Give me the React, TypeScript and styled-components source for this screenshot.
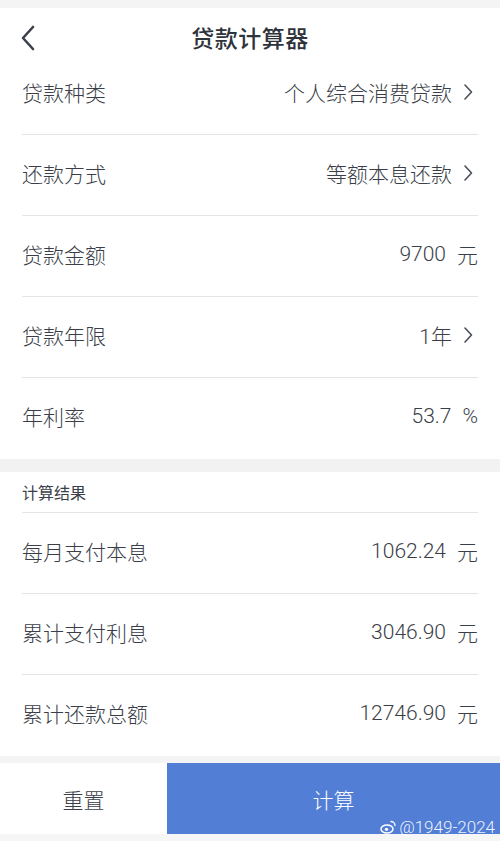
import React from 'react';
import styled, { createGlobalStyle } from 'styled-components';

interface IRow {
  label: string;
  value: string;
  unit?: string;
  arrow?: boolean;
}

const inputRows: IRow[] = [
  { label: '贷款种类', value: '个人综合消费贷款', arrow: true },
  { label: '还款方式', value: '等额本息还款', arrow: true },
  { label: '贷款金额', value: '9700', unit: '元' },
  { label: '贷款年限', value: '1年', arrow: true },
  { label: '年利率', value: '53.7', unit: '%' },
];

const resultRows: IRow[] = [
  { label: '每月支付本息', value: '1062.24', unit: '元' },
  { label: '累计支付利息', value: '3046.90', unit: '元' },
  { label: '累计还款总额', value: '12746.90', unit: '元' },
];

const Chevron = () => (
  <ChevronSvg width="10" height="18" viewBox="0 0 10 18">
    <path d="M2 2 L8.5 9 L2 16" fill="none" stroke="#4a4f5a" strokeWidth="1.6" strokeLinecap="round" strokeLinejoin="round" />
  </ChevronSvg>
);

const BackIcon = () => (
  <svg width="16" height="26" viewBox="0 0 16 26">
    <path d="M13 2 L3 13 L13 24" fill="none" stroke="#3b404c" strokeWidth="2.6" strokeLinecap="round" strokeLinejoin="round" />
  </svg>
);

const Field = ({ label, value, unit, arrow, first, last }: IRow & { first?: boolean; last?: boolean }) => (
  <Row first={first} last={last}>
    <Label>{label}</Label>
    <ValueBox>
      <Value>{value}</Value>
      {unit && <Unit>{unit}</Unit>}
      {arrow && <Chevron />}
    </ValueBox>
  </Row>
);

const App = () => {
  return (
    <>
      <GlobalStyle />
      <Page>
        <TopStrip />
        <Header>
          <Back><BackIcon /></Back>
          <Title>贷款计算器</Title>
        </Header>
        <Section>
          {inputRows.map((row, i) => (
            <Field key={row.label} {...row} first={i === 0} last={i === inputRows.length - 1} />
          ))}
        </Section>
        <Gap />
        <Section>
          <SectionTitle>计算结果</SectionTitle>
          {resultRows.map((row, i) => (
            <Field key={row.label} {...row} last={i === resultRows.length - 1} />
          ))}
        </Section>
        <Footer>
          <ResetButton>重置</ResetButton>
          <CalcButton>
            计算
            <Watermark>
              <WeiboMark viewBox="0 0 16 14" width="16" height="14">
                <ellipse cx="7" cy="9" rx="6" ry="4" fill="none" stroke="#fff" strokeWidth="1.5" />
                <circle cx="6.5" cy="9.3" r="1.6" fill="#fff" />
                <path d="M11 1.5 a4 4 0 0 1 4 4" fill="none" stroke="#fff" strokeWidth="1.3" strokeLinecap="round" />
              </WeiboMark>
              @1949-2024
            </Watermark>
          </CalcButton>
        </Footer>
        <BottomStrip />
      </Page>
    </>
  );
};

const GlobalStyle = createGlobalStyle`
  body {
    margin: 0;
    background: #f4f4f4;
    font-family: Roboto, "Noto Sans CJK SC", sans-serif;
    font-weight: 300;
    color: #343842;
  }
`;

const Page = styled.div`
  width: 500px;
  height: 841px;
  display: flex;
  flex-direction: column;
  background: #f4f4f4;
  overflow: hidden;
`;

const TopStrip = styled.div`
  height: 8px;
  background: #f4f4f4;
`;

const Header = styled.div`
  height: 62px;
  padding-bottom: 4px;
  box-sizing: border-box;
  display: flex;
  align-items: center;
  justify-content: center;
  position: relative;
  background: #fff;
`;

const Back = styled.div`
  position: absolute;
  left: 20px;
  top: 17px;
  display: flex;
`;

const Title = styled.span`
  font-family: "Noto Sans CJK SC", sans-serif;
  font-size: 23px;
  font-weight: 500;
  color: #2f333c;
  letter-spacing: 0.5px;
`;

const Section = styled.div`
  background: #fff;
  padding: 0 22px;
`;

const Row = styled.div<{ first?: boolean; last?: boolean }>`
  height: ${({ first }) => (first ? 65 : 81)}px;
  padding-bottom: ${({ first }) => (first ? 21 : 5)}px;
  display: flex;
  align-items: center;
  justify-content: space-between;
  border-bottom: ${({ last }) => (last ? 'none' : '1.5px solid #e4e4e6')};
  box-sizing: border-box;
`;

const Label = styled.span`
  font-size: 21px;
  color: #3a3e48;
`;

const ValueBox = styled.div`
  display: flex;
  align-items: center;
  gap: 11px;
`;

const Value = styled.span`
  font-size: 21px;
  color: #3a3e48;
`;

const Unit = styled.span`
  font-size: 21px;
  color: #3a3e48;
`;

const ChevronSvg = styled.svg`
  display: block;
  margin-right: 5px;
`;

const Gap = styled.div`
  height: 13px;
  background: #f2f2f2;
`;

const SectionTitle = styled.div`
  height: 41px;
  display: flex;
  align-items: center;
  font-size: 16px;
  font-weight: 400;
  color: #3a3e48;
  border-bottom: 1.5px solid #e4e4e6;
  box-sizing: border-box;
`;

const Footer = styled.div`
  margin-top: 7px;
  height: 71px;
  display: flex;
`;

const ResetButton = styled.div`
  width: 167px;
  background: #fff;
  display: flex;
  align-items: center;
  justify-content: center;
  font-size: 21px;
  color: #3a3e48;
`;

const CalcButton = styled.div`
  flex: 1;
  background: #527ed6;
  display: flex;
  align-items: center;
  justify-content: center;
  font-size: 21px;
  color: #fff;
  position: relative;
`;

const Watermark = styled.div`
  position: absolute;
  right: 5px;
  bottom: -3px;
  display: flex;
  align-items: center;
  gap: 3px;
  font-family: Roboto, "Noto Sans", sans-serif;
  font-size: 17px;
  color: rgba(255, 255, 255, 0.92);
`;

const WeiboMark = styled.svg`
  display: block;
`;

const BottomStrip = styled.div`
  flex: 1;
  background: #f6f6f6;
`;

export default App;
